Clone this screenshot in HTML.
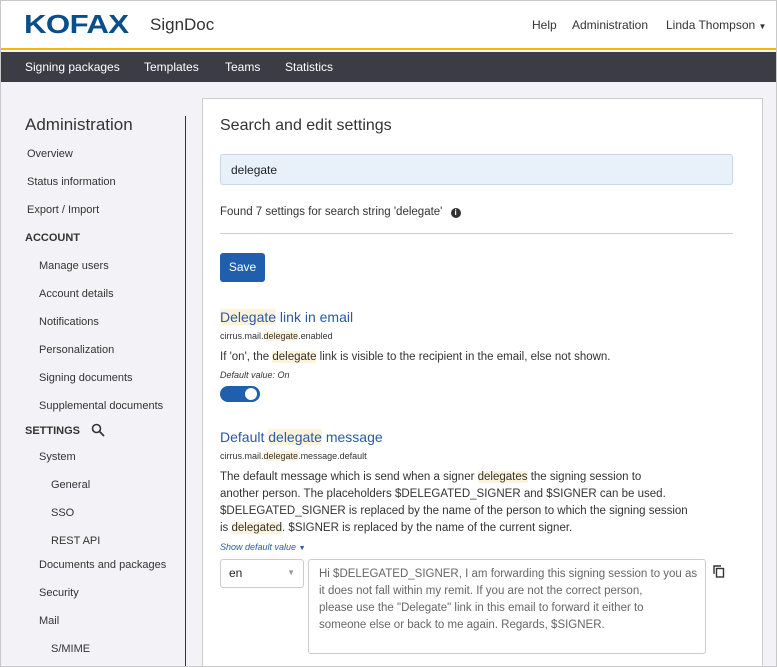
<!DOCTYPE html>
<html><head><meta charset="utf-8"><style>
*{box-sizing:border-box;margin:0;padding:0}
html,body{width:777px;height:667px;overflow:hidden}
body{font-family:"Liberation Sans",sans-serif;background:#f3f3f7;color:#222;position:relative}
.frame{position:absolute;left:0;top:0;width:777px;height:667px;border:1px solid #c8c8c8;pointer-events:none;z-index:9}
.top{position:absolute;left:0;top:0;width:777px;height:50px;background:#fff;border-bottom:2px solid #f5b800}
.logo{position:absolute;left:24px;top:9px;font:900 26px "Liberation Sans",sans-serif;color:#0a4f8a;letter-spacing:-0.5px;transform:scaleX(1.2);transform-origin:left}
.sd{position:absolute;left:150px;top:15px;font-size:17px;color:#333}
.tr{position:absolute;top:18px;font-size:12px;color:#333}
.nav{position:absolute;left:0;top:52px;width:777px;height:30px;background:#3c3d44}
.nav span{position:absolute;top:8px;color:#fff;font-size:12px}
.side{position:absolute;left:0;top:82px;width:186px}
.side .h{position:absolute;left:25px;top:33px;font-size:17px;color:#333}
.side div{position:absolute;font-size:11px;color:#333}
.vl{position:absolute;left:185px;top:116px;width:1px;height:560px;background:#333}
.card{position:absolute;left:202px;top:98px;width:561px;height:580px;background:#fff;border:1px solid #ccc}
.card *{position:absolute}
.hl{background:#fdf3dc;border-radius:2px}
.t1{font-size:14px;color:#2b5aa0}
.k{font-size:9px;color:#333}
.p{font-size:11.5px;color:#333;line-height:17px;white-space:nowrap}
</style></head><body>
<div class="frame"></div>
<div class="top">
<div class="logo">KOFAX</div>
<div class="sd">SignDoc</div>
<div class="tr" style="left:532px">Help</div>
<div class="tr" style="left:572px">Administration</div>
<div class="tr" style="left:666px">Linda Thompson <span style="font-size:8px">▼</span></div>
</div>
<div class="nav"><span style="left:25px">Signing packages</span><span style="left:144px">Templates</span><span style="left:225px">Teams</span><span style="left:285px">Statistics</span></div>
<div class="side">
<div class="h">Administration</div>
<div style="left:27px;top:66px">Overview</div>
<div style="left:27px;top:94px">Status information</div>
<div style="left:27px;top:122px">Export / Import</div>
<div style="left:25px;top:150px;font-weight:bold">ACCOUNT</div>
<div style="left:39px;top:178px">Manage users</div>
<div style="left:39px;top:206px">Account details</div>
<div style="left:39px;top:234px">Notifications</div>
<div style="left:39px;top:262px">Personalization</div>
<div style="left:39px;top:290px">Signing documents</div>
<div style="left:39px;top:318px">Supplemental documents</div>
<div style="left:25px;top:341px;font-weight:bold">SETTINGS <svg width="14" height="14" viewBox="0 0 14 14" style="vertical-align:-3px;margin-left:8px"><circle cx="5.5" cy="5.5" r="4" fill="none" stroke="#333" stroke-width="1.6"/><path d="M8.5 8.5L13 13" stroke="#333" stroke-width="1.8"/></svg></div>
<div style="left:39px;top:369px">System</div>
<div style="left:51px;top:397px">General</div>
<div style="left:51px;top:425px">SSO</div>
<div style="left:51px;top:453px">REST API</div>
<div style="left:39px;top:477px">Documents and packages</div>
<div style="left:39px;top:505px">Security</div>
<div style="left:39px;top:533px">Mail</div>
<div style="left:51px;top:561px">S/MIME</div>
</div>
<div class="vl"></div>
<div class="card">
<div style="left:17px;top:18px;font-size:16px;color:#333">Search and edit settings</div>
<div style="left:17px;top:55px;width:513px;height:31px;background:#e8f0fa;border:1px solid #c9d6ea;border-radius:3px;font-size:12px;padding:8px 10px;color:#222">delegate</div>
<div class="p" style="left:17px;top:105px">Found 7 settings for search string 'delegate' <span style="display:inline-block;position:static;width:10px;height:10px;border-radius:50%;background:#333;color:#fff;font-size:8px;text-align:center;line-height:10px;font-weight:bold;margin-left:5px">i</span></div>
<div style="left:17px;top:134px;width:513px;height:1px;background:#ccc"></div>
<div style="left:17px;top:154px;width:45px;height:29px;background:#1f5fae;border-radius:3px;color:#fff;font-size:12px;text-align:center;line-height:29px">Save</div>
<div class="t1" style="left:17px;top:210px"><span class="hl" style="position:static">Delegate</span> link in email</div>
<div class="k" style="left:17px;top:232px">cirrus.mail.<span class="hl" style="position:static">delegate</span>.enabled</div>
<div class="p" style="left:17px;top:250px">If 'on', the <span class="hl" style="position:static">delegate</span> link is visible to the recipient in the email, else not shown.</div>
<div class="k" style="left:17px;top:271px;font-style:italic">Default value: On</div>
<div style="left:17px;top:287px;width:40px;height:16px;border-radius:8px;background:#1f5fae"><div style="right:3px;top:2px;width:12px;height:12px;border-radius:50%;background:#fff"></div></div>
<div class="t1" style="left:17px;top:330px">Default <span class="hl" style="position:static">delegate</span> message</div>
<div class="k" style="left:17px;top:352px">cirrus.mail.<span class="hl" style="position:static">delegate</span>.message.default</div>
<div class="p" style="left:17px;top:370px">The default message which is send when a signer <span class="hl" style="position:static">delegates</span> the signing session to<br>another person. The placeholders $DELEGATED_SIGNER and $SIGNER can be used.<br>$DELEGATED_SIGNER is replaced by the name of the person to which the signing session<br>is <span class="hl" style="position:static">delegated</span>. $SIGNER is replaced by the name of the current signer.</div>
<div class="k" style="left:17px;top:443px;font-style:italic;color:#2b5aa0">Show default value <span style="position:static;font-size:7px">▼</span></div>
<div style="left:17px;top:460px;width:84px;height:29px;border:1px solid #ccc;border-radius:3px;font-size:12px;padding:6px 8px">en<span style="right:8px;top:8px;font-size:8px;color:#999">▼</span></div>
<div class="p" style="left:105px;top:460px;width:398px;height:95px;border:1px solid #ccc;border-radius:3px;padding:6px 10px;color:#666;font-size:11.5px;line-height:17px">Hi $DELEGATED_SIGNER, I am forwarding this signing session to you as<br>it does not fall within my remit. If you are not the correct person,<br>please use the "Delegate" link in this email to forward it either to<br>someone else or back to me again. Regards, $SIGNER.</div>
<svg style="left:510px;top:466px" width="12" height="13" viewBox="0 0 12 13"><path d="M1 9V1h7" fill="none" stroke="#333" stroke-width="1.4"/><rect x="3.5" y="3.5" width="7" height="8.5" fill="none" stroke="#333" stroke-width="1.4"/></svg>
</div>
</body></html>
